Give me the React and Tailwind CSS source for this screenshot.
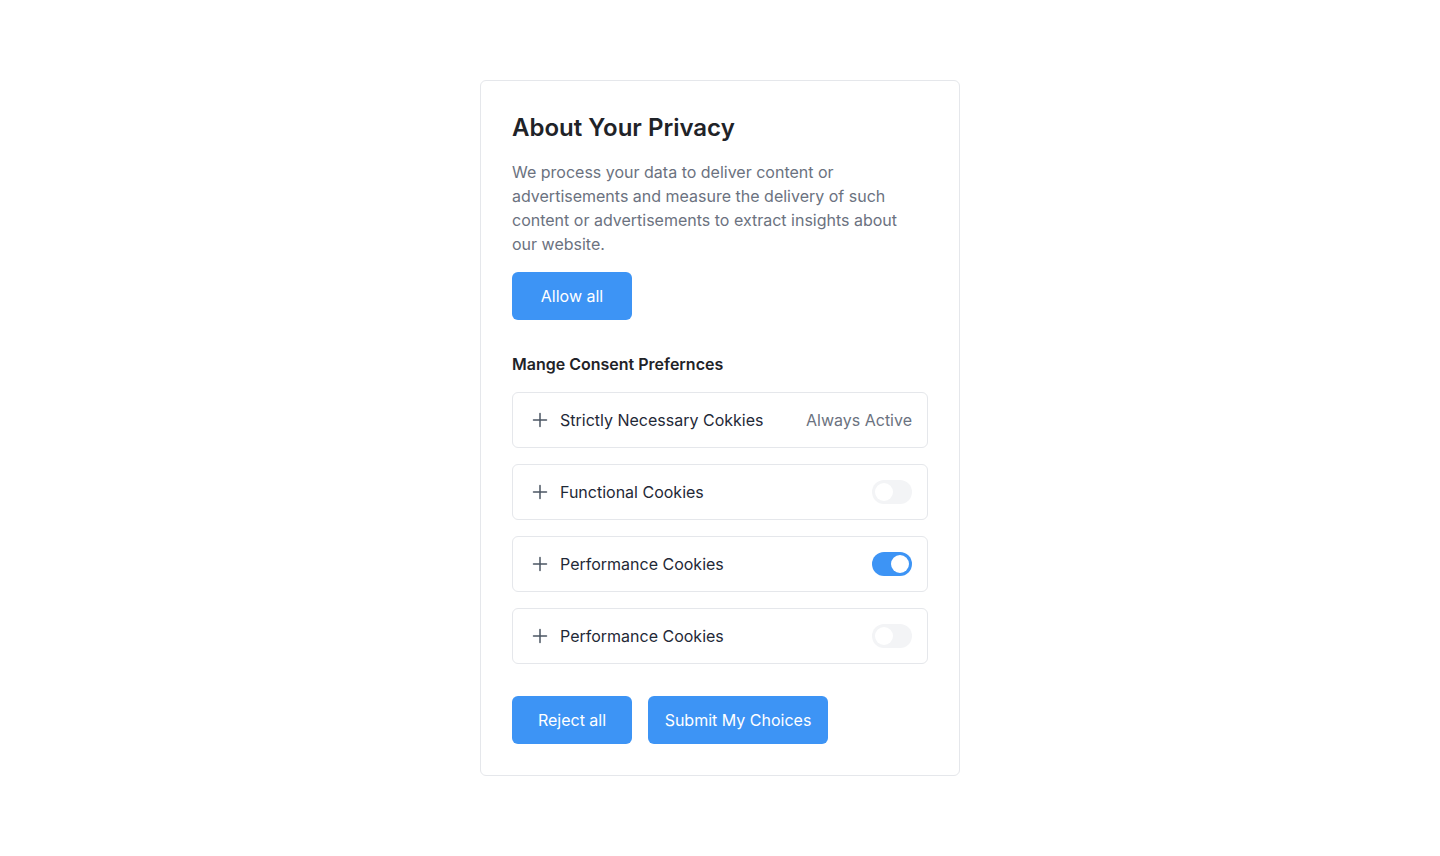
import React, { useState } from 'react';

const Toggle = ({ on, onChange }) => (
    <button
        onClick={onChange}
        className={`relative w-10 h-6 rounded-full transition-all ${on ? 'bg-[#3d94f5]' : 'bg-[#f3f4f6]'}`}
    >
        <span
            className={`absolute top-[3px] w-[18px] h-[18px] rounded-full bg-white ${on ? 'left-[19px]' : 'left-[3px]'}`}
        />
    </button>
);

const PlusIcon = () => (
    <svg width="16" height="16" viewBox="0 0 16 16" fill="none" stroke="#4b5563" strokeWidth="1.5" strokeLinecap="round">
        <path d="M8 1.5v13M1.5 8h13" />
    </svg>
);

const Row = ({ label, right }) => (
    <div className="flex items-center justify-between h-14 pl-[19px] pr-[15px] border border-[#e5e7eb] rounded-md">
        <div className="flex items-center gap-3">
            <PlusIcon />
            <span className="text-base text-[#1f2937]">{label}</span>
        </div>
        {right}
    </div>
);

export default function App() {
    const [prefs, setPrefs] = useState({ functional: false, performance: true, performance2: false });
    const flip = (k) => setPrefs((p) => ({ ...p, [k]: !p[k] }));

    return (
        <div className="min-h-screen bg-white pt-20" style={{ fontFamily: 'Inter, "Noto Sans", sans-serif' }}>
            <div className="w-[480px] mx-auto border border-[#e5e7eb] rounded-md p-[31px]">
                <h2 className="text-2xl font-semibold text-[#1f2328] leading-8">About Your Privacy</h2>
                <p className="mt-4 max-w-[400px] text-base leading-6 text-[#6b7280]">
                    We process your data to deliver content or advertisements and measure the delivery of such content or advertisements to extract insights about our website.
                </p>
                <button className="mt-4 h-12 w-[120px] rounded-md bg-[#3d94f5] text-white text-base">Allow all</button>

                <h3 className="mt-8 text-base leading-6 font-semibold text-[#1f2328]">Mange Consent Prefernces</h3>
                <div className="mt-4 flex flex-col gap-4">
                    <Row label="Strictly Necessary Cokkies" right={<span className="text-base text-[#6b7280]">Always Active</span>} />
                    <Row label="Functional Cookies" right={<Toggle on={prefs.functional} onChange={() => flip('functional')} />} />
                    <Row label="Performance Cookies" right={<Toggle on={prefs.performance} onChange={() => flip('performance')} />} />
                    <Row label="Performance Cookies" right={<Toggle on={prefs.performance2} onChange={() => flip('performance2')} />} />
                </div>

                <div className="mt-8 flex gap-4">
                    <button className="h-12 w-[120px] rounded-md bg-[#3d94f5] text-white text-base">Reject all</button>
                    <button className="h-12 w-[180px] rounded-md bg-[#3d94f5] text-white text-base">Submit My Choices</button>
                </div>
            </div>
        </div>
    );
}
